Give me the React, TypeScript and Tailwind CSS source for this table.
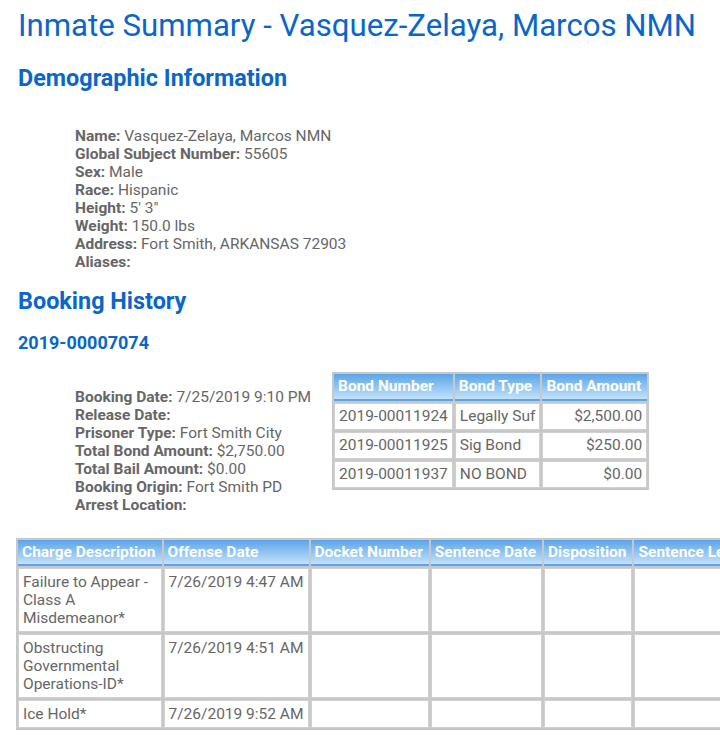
const demographics: [string, string][] = [
  ["Name:", "Vasquez-Zelaya, Marcos NMN"],
  ["Global Subject Number:", "55605"],
  ["Sex:", "Male"],
  ["Race:", "Hispanic"],
  ["Height:", "5' 3\""],
  ["Weight:", "150.0 lbs"],
  ["Address:", "Fort Smith, ARKANSAS 72903"],
  ["Aliases:", ""],
];

const booking: [string, string][] = [
  ["Booking Date:", "7/25/2019 9:10 PM"],
  ["Release Date:", ""],
  ["Prisoner Type:", "Fort Smith City"],
  ["Total Bond Amount:", "$2,750.00"],
  ["Total Bail Amount:", "$0.00"],
  ["Booking Origin:", "Fort Smith PD"],
  ["Arrest Location:", ""],
];

const bonds = [
  ["2019-00011924", "Legally Suf", "$2,500.00"],
  ["2019-00011925", "Sig Bond", "$250.00"],
  ["2019-00011937", "NO BOND", "$0.00"],
];

const charges = [
  ["Failure to Appear - Class A Misdemeanor*", "7/26/2019 4:47 AM"],
  ["Obstructing Governmental Operations-ID*", "7/26/2019 4:51 AM"],
  ["Ice Hold*", "7/26/2019 9:52 AM"],
];

const th =
  "bg-gradient-to-b from-[#5aa5e8] to-[#c2e1fa] border-b-2 border-[#5aa5e8] text-white font-bold text-left pl-[4px] pr-[6px] py-[3px] whitespace-nowrap";
const td = "bg-white border border-[#d0d0d0] px-[4px] align-top";

function FieldList({ items }: { items: [string, string][] }) {
  return (
    <div className="text-[15.5px] leading-[18px] text-[#666]">
      {items.map(([k, v]) => (
        <div key={k}>
          <span className="font-bold">{k}</span> {v}
        </div>
      ))}
    </div>
  );
}

export default function App() {
  return (
    <div
      className="w-[720px] h-[748px] overflow-hidden bg-white pl-[18px]"
      style={{ fontFamily: "Roboto, 'Liberation Sans', sans-serif" }}
    >
      <h1 className="text-[31.2px] leading-[38px] pt-[7px] text-[#0a66c8] whitespace-nowrap">
        Inmate Summary - Vasquez-Zelaya, Marcos NMN
      </h1>
      <h2 className="mt-[19px] text-[23.4px] leading-[28px] font-bold text-[#0a66c8]">
        Demographic Information
      </h2>
      <div className="ml-[57px] mt-[35px]">
        <FieldList items={demographics} />
      </div>

      <h2 className="mt-[16px] text-[23.4px] leading-[28px] font-bold text-[#0a66c8]">
        Booking History
      </h2>
      <h3 className="mt-[17px] text-[18px] leading-[22px] font-bold text-[#0a66c8]">
        2019-00007074
      </h3>

      <div className="flex items-start mt-[18px]">
        <div className="ml-[57px] mt-[16px] w-[257px]">
          <FieldList items={booking} />
        </div>
        <table className="border-separate border-spacing-[2px] bg-[#c8c8c8] text-[15.5px] leading-[19px] text-[#666]">
          <thead>
            <tr>
              <th className={th}>Bond Number</th>
              <th className={th}>Bond Type</th>
              <th className={th}>Bond Amount</th>
            </tr>
          </thead>
          <tbody>
            {bonds.map((b) => (
              <tr key={b[0]}>
                <td className={td + " py-[3px] whitespace-nowrap"}>{b[0]}</td>
                <td className={td + " py-[3px] whitespace-nowrap"}>{b[1]}</td>
                <td className={td + " py-[3px] whitespace-nowrap text-right"}>{b[2]}</td>
              </tr>
            ))}
          </tbody>
        </table>
      </div>

      <table className="mt-[24px] border-separate border-spacing-[2px] bg-[#c8c8c8] text-[15.5px] leading-[18px] text-[#666] -ml-[2px]">
        <thead>
          <tr>
            <th className={th}>Charge Description</th>
            <th className={th}>Offense Date</th>
            <th className={th + " w-[120px]"}>Docket Number</th>
            <th className={th}>Sentence Date</th>
            <th className={th}>Disposition</th>
            <th className={th}>Sentence Length</th>
            <th className={th}>Release Date</th>
          </tr>
        </thead>
        <tbody>
          {charges.map((c) => (
            <tr key={c[0]}>
              <td className={td + " py-[4px] w-[145px]"}>{c[0]}</td>
              <td className={td + " py-[4px] whitespace-nowrap"}>{c[1]}</td>
              <td className={td}></td>
              <td className={td}></td>
              <td className={td}></td>
              <td className={td}></td>
              <td className={td}></td>
            </tr>
          ))}
        </tbody>
      </table>
    </div>
  );
}
